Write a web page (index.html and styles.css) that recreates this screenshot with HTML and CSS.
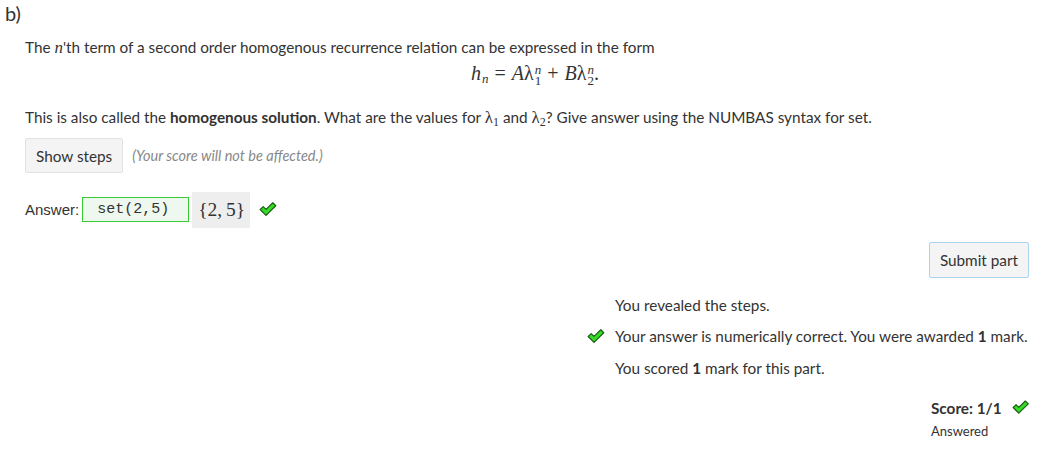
FILE: index.html
```html
<!DOCTYPE html>
<html>
<head>
<meta charset="utf-8">
<link rel="stylesheet" href="styles.css">
</head>
<body>
<div class="part">
  <div class="part-name">b)</div>
  <div class="part-body">
    <p class="prompt">The <span class="mi">n</span>'th term of a second order homogenous recurrence relation can be expressed in the form</p>
    <div class="math-display">
      <span class="mi">h</span><span class="msub mi">n</span><span class="mo">=</span><span class="mi">A</span><span class="mi lam">λ</span><span class="supsub"><span class="mi sup">n</span><span class="sub">1</span></span><span class="mo">+</span><span class="mi">B</span><span class="mi lam">λ</span><span class="supsub"><span class="mi sup">n</span><span class="sub">2</span></span><span class="mn">.</span>
    </div>
    <p class="prompt second">This is also called the <b>homogenous solution</b>. What are the values for <span class="mi lam">λ</span><span class="nsub">1</span> and <span class="mi lam">λ</span><span class="nsub">2</span>? Give answer using the NUMBAS syntax for set.</p>
    <div class="steps-row">
      <button class="btn">Show steps</button>
      <span class="note">(Your score will not be affected.)</span>
    </div>
    <div class="answer-row">
      <span class="answer-label">Answer:</span>
      <span class="answer-input">set(2,5)</span>
      <span class="preview"><span>{</span>2,&thinsp;5<span>}</span></span>
      <svg class="check" width="18" height="15" viewBox="0 0 18 15"><polygon points="1.2,7.5 4.2,4.6 7,7.4 13.8,0.8 16.8,3.7 7,13.4" fill="#33dd22" stroke="#1f5a1a" stroke-width="1.2" stroke-linejoin="round"/></svg>
    </div>
    <div class="submit-row">
      <button class="btn submit">Submit part</button>
    </div>
    <div class="feedback-wrap">
      <ul class="feedback">
        <li><span class="fb-icon"></span><span>You revealed the steps.</span></li>
        <li><span class="fb-icon"><svg class="check" width="18" height="15" viewBox="0 0 18 15"><polygon points="1.2,7.5 4.2,4.6 7,7.4 13.8,0.8 16.8,3.7 7,13.4" fill="#33dd22" stroke="#1f5a1a" stroke-width="1.2" stroke-linejoin="round"/></svg></span><span>Your answer is numerically correct. You were awarded <b>1</b> mark.</span></li>
        <li><span class="fb-icon"></span><span>You scored <b>1</b> mark for this part.</span></li>
      </ul>
    </div>
    <div class="score-wrap">
      <div class="score">
        <div class="score-line"><b>Score: 1/1</b><svg class="check" width="18" height="15" viewBox="0 0 18 15"><polygon points="1.2,7.5 4.2,4.6 7,7.4 13.8,0.8 16.8,3.7 7,13.4" fill="#33dd22" stroke="#1f5a1a" stroke-width="1.2" stroke-linejoin="round"/></svg></div>
        <div class="answered">Answered</div>
      </div>
    </div>
  </div>
</div>
</body>
</html>
```

FILE: styles.css
```css
html, body {
  margin: 0;
  padding: 0;
  background: #fff;
}
body {
  font-family: Lato, "Open Sans", sans-serif;
  font-size: 15.3px;
  color: #333;
  width: 1041px;
}
.part {
  padding: 0 12px 0 5px;
}
.part-name {
  font-size: 20px;
  line-height: 24px;
  padding-top: 1px;
  color: #333;
}
.part-body {
  padding-left: 20px;
}
.prompt {
  margin: 11px 0 0 0;
  line-height: 22px;
}
.prompt.second {
  margin-top: 14px;
}
.mi {
  font-family: "Liberation Serif", "DejaVu Serif", serif;
  font-style: italic;
  font-size: 17px;
}
.lam {
  font-style: normal;
}
.math-display {
  text-align: center;
  line-height: 26px;
  margin: 1px 0 0 0;
  padding-left: 16px;
}
.math-display .mi {
  font-size: 20px;
}
.mo, .mn {
  font-family: "Liberation Serif", serif;
  font-size: 20px;
}
.mo {
  margin: 0 6px;
}
.math-display .msub {
  font-size: 13px;
  vertical-align: -3px;
  margin-left: 1px;
}
.supsub {
  display: inline-block;
  vertical-align: -5px;
  line-height: 11px;
  margin-left: 1px;
}
.supsub .sup, .supsub .sub {
  display: block;
  font-size: 13px;
}
.supsub .sub {
  font-family: "Liberation Serif", serif;
}
.nsub {
  font-family: "Liberation Serif", serif;
  font-size: 12px;
  vertical-align: -3px;
  line-height: 0;
}
.steps-row {
  display: flex;
  align-items: center;
  margin-top: 9px;
  gap: 9px;
}
.btn {
  font-family: inherit;
  font-size: 15.3px;
  color: #333;
  background: #f4f4f4;
  border: 1px solid #e2e2e2;
  border-radius: 2px;
  padding: 0 10px;
  height: 35px;
}
.note {
  font-style: italic;
  font-size: 14.5px;
  color: #888;
}
.answer-row {
  display: flex;
  align-items: center;
  margin-top: 18px;
  height: 37px;
}
.answer-label {
  font-family: "Liberation Sans", Arial, sans-serif;
  font-size: 15px;
  margin-right: 3px;
}
.answer-input {
  font-family: "Liberation Mono", monospace;
  font-size: 15px;
  color: #333;
  background: #eef8ee;
  border: 1px solid #3c3;
  width: 107px;
  height: 25px;
  box-sizing: border-box;
  padding-left: 14px;
  line-height: 23px;
}
.preview {
  background: #eee;
  margin-left: 3px;
  height: 36px;
  padding: 0 5px 0 6px;
  display: flex;
  align-items: center;
  font-family: "Liberation Serif", serif;
  font-size: 19.5px;
}
.answer-row .check {
  margin-left: 9px;
}
.submit-row {
  display: flex;
  justify-content: flex-end;
  margin-top: 14px;
}
.submit {
  border-color: #a8d4f0;
  padding: 0 10px;
  height: 36px;
}
.feedback-wrap {
  display: flex;
  justify-content: flex-end;
  margin-top: 11px;
}
.feedback {
  list-style: none;
  margin: 0;
  padding: 0;
  width: 442px;
}
.feedback li {
  display: flex;
  align-items: center;
  height: 31.5px;
}
.fb-icon {
  width: 28px;
  display: flex;
  align-items: center;
}
.score-wrap {
  display: flex;
  justify-content: flex-end;
  margin-top: 12px;
}
.score {
  width: 98px;
  white-space: nowrap;
}
.score-line {
  display: flex;
  align-items: center;
  gap: 10px;
  height: 24px;
}
.answered {
  font-size: 13px;
  margin-top: 3px;
}
```
